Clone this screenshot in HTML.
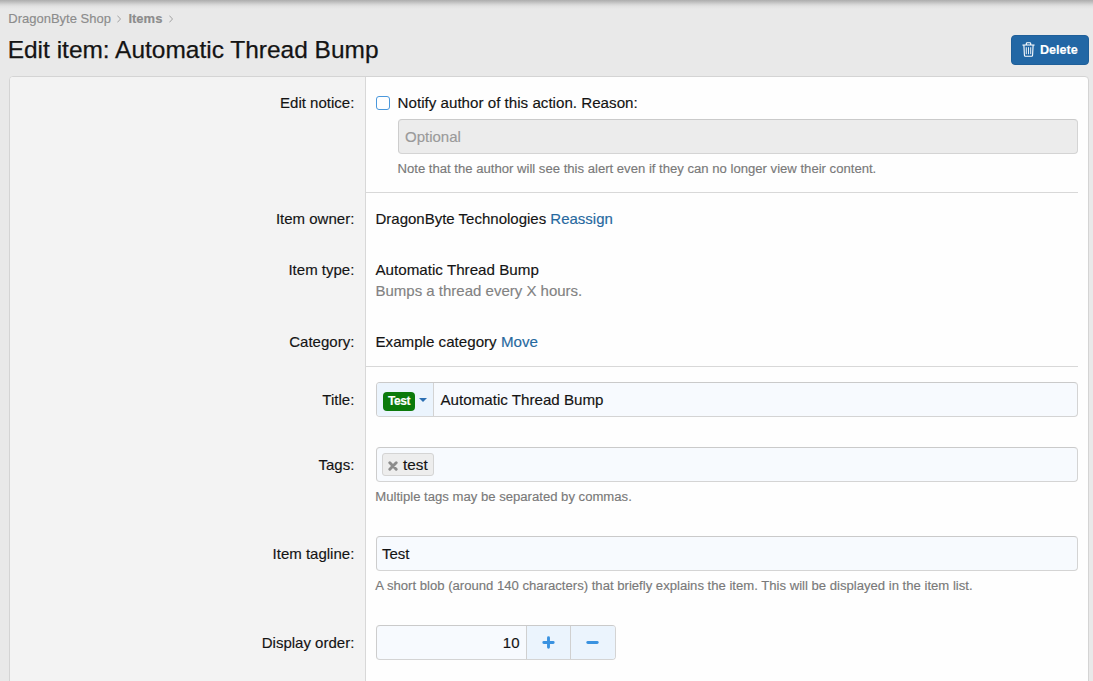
<!DOCTYPE html>
<html lang="en">
<head>
<meta charset="utf-8">
<title>Edit item: Automatic Thread Bump</title>
<style>
*{box-sizing:border-box;margin:0;padding:0}
html,body{width:1093px;height:681px;overflow:hidden}
body{background:#e9e9e9;font-family:"Liberation Sans",Arial,Helvetica,sans-serif;font-size:15px;color:#141414;position:relative;-webkit-text-stroke:0.15px}
.topshade{position:absolute;left:0;top:0;width:1093px;height:9px;background:linear-gradient(#adadad,#c1c1c1 25%,#d5d5d5 48%,#e2e2e2 70%,#e9e9e9)}
.crumbs{position:absolute;left:8.3px;top:11px;font-size:13px;line-height:16px;color:#8c8c8c;white-space:nowrap}
.crumbs b{font-weight:bold}
.crumbs svg{display:inline-block;margin:0 7px 0 6.5px;vertical-align:0.5px}
h1{position:absolute;left:7.7px;top:36px;font-size:24.47px;-webkit-text-stroke:0.25px #141414;line-height:28px;font-weight:normal;color:#141414;white-space:nowrap}
.btn{position:absolute;left:1011px;top:35px;width:78px;height:30px;border-radius:4px;background:#2267a5;border:1px solid #1f5f99;color:#fff;font-size:12.6px;font-weight:bold;line-height:28px;white-space:nowrap}
.btn svg{position:absolute;left:10px;top:6px}
.btn span{position:absolute;left:28px;top:0}
.panel{position:absolute;left:9px;top:76px;width:1080px;height:640px;background:#fefefe;border:1px solid #d4d4d4;border-radius:4px;overflow:hidden}
.labelcol{position:absolute;left:0;top:0;width:356px;height:100%;background:#f3f3f3;border-right:1px solid #d8d8d8}
.lbl{position:absolute;right:733.7px;white-space:nowrap;font-size:15px;line-height:20px;color:#141414}
.txt{position:absolute;left:365.5px;white-space:nowrap;font-size:15px;line-height:20px}
.hint{position:absolute;white-space:nowrap;font-size:13.11px;line-height:16px;color:#797979}
a{color:#27699f;text-decoration:none}
.sepline{position:absolute;left:356px;width:712px;height:1px;background:#d8d8d8}
.input{position:absolute;left:366px;width:702px;height:35px;border:1px solid #d4d4d4;border-top-color:#cacaca;border-left-color:#cdcdcd;border-radius:4px;background:#f7fafe;font-size:15px;line-height:33px;padding-left:5px;white-space:nowrap}
.cb{position:absolute;left:365.5px;top:18.5px;width:14.5px;height:14.5px;border:1.5px solid #4a98dc;border-radius:3px;background:#fff}
</style>
</head>
<body>
<div class="topshade"></div>
<div class="crumbs">DragonByte Shop<svg width="4" height="8" viewBox="0 0 4 8" fill="none" stroke="#a3a3a3" stroke-width="1"><path d="M0.4 0.6L3.5 4L0.4 7.4"/></svg><b>Items</b><svg width="4" height="8" viewBox="0 0 4 8" fill="none" stroke="#a3a3a3" stroke-width="1"><path d="M0.4 0.6L3.5 4L0.4 7.4"/></svg></div>
<h1>Edit item: Automatic Thread Bump</h1>
<div class="btn"><svg width="13" height="15" viewBox="0 0 13 15" fill="none" stroke="#fff" stroke-width="1.1" stroke-linecap="round" stroke-linejoin="round"><path d="M0.8 3h11.4M4.3 2.8V1.6q0-.9.9-.9h2.6q.9 0 .9.9v1.2M1.9 3.2l.5 10q.05 1 1 1h6.2q.95 0 1-1l.5-10"/><path d="M4.3 5.6v6.2M6.5 5.6v6.2M8.7 5.6v6.2" stroke-width="0.9"/></svg><span>Delete</span></div>
<div class="panel">
  <div class="labelcol"></div>

  <div class="lbl" style="top:16px">Edit notice:</div>
  <div class="cb"></div>
  <div class="txt" style="left:387.6px;top:16px;font-size:15.17px">Notify author of this action. Reason:</div>
  <div class="input" style="left:388px;top:42px;width:680px;background:#ececec;color:#9a9a9a;padding-left:6px">Optional</div>
  <div class="hint" style="left:387.5px;top:84px">Note that the author will see this alert even if they can no longer view their content.</div>
  <div class="sepline" style="top:115px"></div>

  <div class="lbl" style="top:132px">Item owner:</div>
  <div class="txt" style="top:132px">DragonByte Technologies <a>Reassign</a></div>

  <div class="lbl" style="top:183px">Item type:</div>
  <div class="txt" style="top:183px;font-size:15.18px">Automatic Thread Bump</div>
  <div class="txt" style="top:203.7px;color:#828282">Bumps a thread every X hours.</div>

  <div class="lbl" style="top:255px">Category:</div>
  <div class="txt" style="top:255px;font-size:15.15px">Example category <a>Move</a></div>
  <div class="sepline" style="top:289px"></div>

  <div class="lbl" style="top:313px">Title:</div>
  <div class="input" style="top:305px;padding-left:0">
    <span style="position:absolute;left:0;top:0;width:57px;height:33px;background:#ebf4fd;border-right:1px solid #d3d3d3;border-radius:3px 0 0 3px"></span>
    <span style="position:absolute;left:6px;top:9px;height:18.5px;line-height:18.5px;padding:0 5px;background:#0b7a0b;color:#fff;font-size:12px;font-weight:bold;border-radius:4px;letter-spacing:-0.45px">Test</span>
    <span style="position:absolute;left:41.8px;top:15px;width:0;height:0;border-left:4.2px solid transparent;border-right:4.2px solid transparent;border-top:4.6px solid #2b6fb3"></span>
    <span style="position:absolute;left:63.5px;top:0;font-size:15.15px">Automatic Thread Bump</span>
  </div>

  <div class="lbl" style="top:378px">Tags:</div>
  <div class="input" style="top:370px;padding-left:0">
    <span style="position:absolute;left:5px;top:5px;height:23px;line-height:21px;padding:0 5px 0 5px;background:#ededed;border:1px solid #d4d4d4;border-radius:3px;color:#141414;font-size:15.3px"><svg style="display:inline-block;vertical-align:-0.5px;margin:0 5px 0 0" width="10" height="10" viewBox="0 0 10 10" fill="none" stroke="#8c8c8c" stroke-width="2.9" stroke-linecap="round"><path d="M1.8 1.8L8.2 8.2M8.2 1.8L1.8 8.2"/></svg>test</span>
  </div>
  <div class="hint" style="left:365.3px;top:412px">Multiple tags may be separated by commas.</div>

  <div class="lbl" style="top:467px">Item tagline:</div>
  <div class="input" style="top:459px">Test</div>
  <div class="hint" style="left:365.3px;top:501px">A short blob (around 140 characters) that briefly explains the item. This will be displayed in the item list.</div>

  <div class="lbl" style="top:556px">Display order:</div>
  <div class="input" style="top:548px;width:240px;padding-left:0">
    <span style="position:absolute;right:95.5px;top:0">10</span>
    <span style="position:absolute;left:149px;top:0;width:45px;height:33px;background:#ebf4fd;border-left:1px solid #d0d0d0"><svg style="position:absolute;left:14.5px;top:9.5px" width="13" height="13" viewBox="0 0 13 13" fill="none" stroke="#3a92e0" stroke-width="2.9" stroke-linecap="round"><path d="M1.8 6.5h9.4M6.5 1.8v9.4"/></svg></span>
    <span style="position:absolute;left:193px;top:0;width:45px;height:33px;background:#ebf4fd;border-left:1px solid #d0d0d0;border-radius:0 3px 3px 0"><svg style="position:absolute;left:14.5px;top:9.5px" width="13" height="13" viewBox="0 0 13 13" fill="none" stroke="#3a92e0" stroke-width="2.9" stroke-linecap="round"><path d="M1.8 6.5h9.4"/></svg></span>
  </div>
</div>
</body>
</html>
